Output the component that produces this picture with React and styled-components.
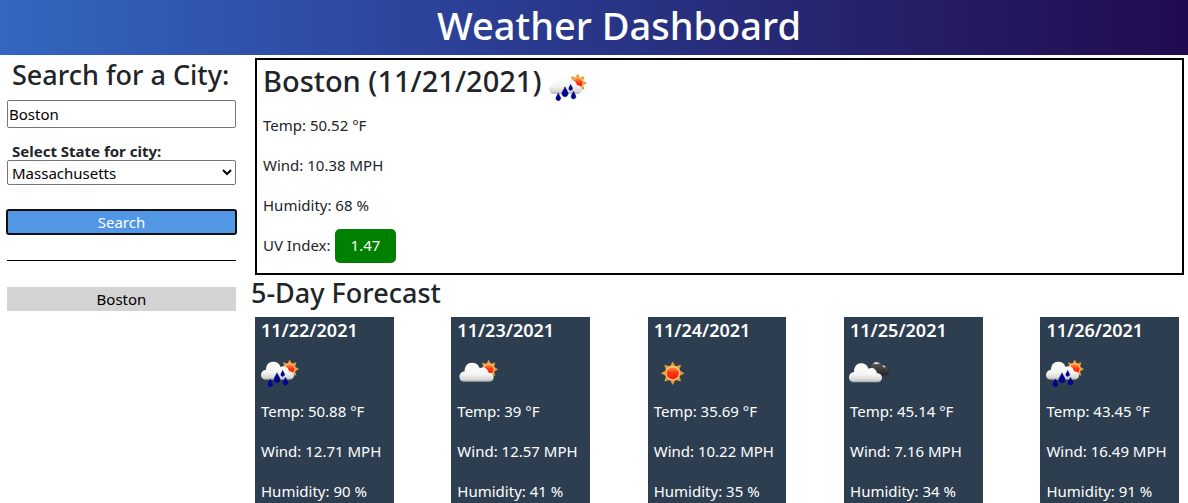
import React, { useState } from "react";
import styled, { createGlobalStyle } from "styled-components";

const GlobalStyle = createGlobalStyle`
  *, *::before, *::after { box-sizing: border-box; }
  body {
    margin: 0;
    background: #fff;
    color: #212529;
    font-family: "Segoe UI", "Noto Sans", "Open Sans", sans-serif;
    font-size: 15px;
    line-height: 24px;
  }
  h1, h2, h3, p { margin: 0; }
  button, input, select { font: inherit; color: #000; }
`;

const Header = styled.header`
  padding: 0 0 5px 50px;
  background: linear-gradient(to right, #3467c0, #2b3f95 40%, #25236c 72%, #220a50);
  color: #fff;
  text-align: center;
`;

const Title = styled.h1`
  font-size: 38px;
  font-weight: 500;
  line-height: 50px;
`;

const Layout = styled.div`
  display: grid;
  grid-template-columns: 243px minmax(0, 1fr);
  gap: 8px;
`;

const Sidebar = styled.aside`
  padding: 3px 7px;
`;

const SearchForm = styled.form`
  display: flex;
  flex-direction: column;
`;

const SearchHeading = styled.label`
  margin-bottom: 8px;
  padding-left: 5px;
  font-size: 27px;
  font-weight: 500;
  line-height: 34px;
  white-space: nowrap;
`;

const CityInput = styled.input`
  width: 100%;
  height: 28px;
  margin-bottom: 11px;
  padding: 1px;
  border: 1px solid #767676;
  border-radius: 2px;
  background: #fff;
`;

const StateLabel = styled.label`
  height: 21px;
  padding-left: 5px;
  font-weight: 700;
`;

const StateSelect = styled.select`
  width: 100%;
  height: 25px;
  margin-bottom: 25px;
  border: 1px solid #767676;
  border-radius: 2px;
  background: #fff;
`;

const SearchButton = styled.button`
  height: 24px;
  padding: 0;
  border: 0;
  border-radius: 2px;
  outline: 2px solid #101010;
  outline-offset: -1px;
  background: #5197e5;
  color: #fff;
  line-height: 24px;
`;

const Divider = styled.hr`
  height: 1px;
  margin: 26px 0;
  border: 0;
  background: #000;
`;

const HistoryButton = styled.button`
  display: block;
  width: 100%;
  height: 24px;
  padding: 0;
  border: 0;
  background: #d3d3d3;
  line-height: 24px;
`;

const Main = styled.main`
  padding: 3px 4px 0 0;
`;

const Current = styled.section`
  margin-left: 4px;
  padding: 0 6px 10px;
  border: 2px solid #000;
`;

const CurrentHeading = styled.div`
  display: flex;
  height: 53px;
  gap: 2px;
`;

const CityName = styled.h2`
  font-size: 29px;
  font-weight: 500;
  line-height: 42px;
`;

const Reading = styled.p`
  & + & { margin-top: 16px; }
`;

const UvReading = styled.div`
  display: flex;
  align-items: baseline;
  gap: 4px;
  margin-top: 12px;
`;

const UvBadge = styled.span`
  padding: 4px 16px 6px;
  border-radius: 5px;
  background: #008000;
  color: #fff;
`;

const ForecastHeading = styled.h2`
  font-size: 27px;
  font-weight: 500;
  line-height: 34px;
  margin: 1px 0 7px;
`;

const Forecast = styled.section`
  display: flex;
  justify-content: space-between;
  padding: 0 5px 0 4px;
`;

const Card = styled.article`
  flex: 0 0 15%;
  padding-bottom: 1px;
  background: #2d3e50;
  color: #fff;
  white-space: nowrap;
`;

const CardDate = styled.h3`
  padding-left: 6px;
  font-size: 18px;
  font-weight: 600;
  line-height: 27px;
`;

const CardReadings = styled.div`
  padding-left: 6px;
`;

const IconSvg = styled.svg`
  display: block;
  flex: none;
  width: 50px;
  height: 50px;
  margin-top: ${({ $top }) => $top}px;
`;

const CardIconRow = styled.div`
  padding: 4px 0 1px;
`;

function Sun({ x, y, scale = 1 }) {
  const points = Array.from({ length: 16 }, (_, i) => {
    const a = (i * Math.PI) / 8;
    const r = i % 2 ? 7.4 : 11.8;
    return `${Math.sin(a) * r},${-Math.cos(a) * r}`;
  }).join(" ");
  return (
    <g transform={`translate(${x} ${y}) scale(${scale})`}>
      <polygon points={points} fill="#e39b37" />
      <circle r="7.2" fill="#ffdf9a" />
      <circle r="6.2" fill="url(#sunFill)" />
    </g>
  );
}

const cloudPath =
  "M5 19C2 19 0 17 0 14C0 11 2 9 5 8.600C5 3 8 0 12 0C16 0 18.500 2 19.500 5.500C23 3.500 27.500 5.500 28 10C31 10 33 12 33 14.500C33 17 31 19 28 19Z";

function Cloud({ x, y, sx = 1, sy = 1, fill = "url(#cloudFill)" }) {
  return <path d={cloudPath} transform={`translate(${x} ${y}) scale(${sx} ${sy})`} fill={fill} />;
}

function Drop({ x, y, scale = 1 }) {
  return (
    <path
      d="M0 -5.500C.700 -3 3.200 -.800 3.200 1.700C3.200 3.700 1.800 5 0 5C-1.800 5 -3.200 3.700 -3.200 1.700C-3.200 -.800 -.700 -3 0 -5.500Z"
      transform={`translate(${x} ${y}) scale(${scale})`}
      fill="#02029a"
      stroke="#00005e"
      strokeWidth=".5"
    />
  );
}

function WeatherIcon({ kind, top = 0 }) {
  return (
    <IconSvg viewBox="0 0 50 50" role="img" aria-label={kind} $top={top}>
      <defs>
        <linearGradient id="cloudFill" x1="0" y1="0" x2="0" y2="1">
          <stop offset="0" stopColor="#ffffff" />
          <stop offset=".6" stopColor="#f4f4f4" />
          <stop offset=".88" stopColor="#d6d6d6" />
          <stop offset="1" stopColor="#a6a6a6" />
        </linearGradient>
        <linearGradient id="darkFill" x1="0" y1="0" x2="0" y2="1">
          <stop offset="0" stopColor="#555555" />
          <stop offset="1" stopColor="#252525" />
        </linearGradient>
        <linearGradient id="sunFill" x1="0" y1="0" x2="0" y2="1">
          <stop offset="0" stopColor="#ff9a4a" />
          <stop offset=".45" stopColor="#ff3512" />
          <stop offset="1" stopColor="#f51a00" />
        </linearGradient>
      </defs>
      {kind === "sun" && <Sun x={24.7} y={25.2} />}
      {kind === "rain" && (
        <>
          <Sun x={34.7} y={21} scale={0.8} />
          <Cloud x={6} y={13.7} sy={0.95} />
          <Drop x={15.3} y={35} scale={0.75} />
          <Drop x={22} y={30} scale={0.95} />
          <Drop x={27.7} y={25.5} scale={0.6} />
          <Drop x={30.5} y={33.3} scale={0.75} />
        </>
      )}
      {kind === "partly" && (
        <>
          <Sun x={37.7} y={21.3} scale={0.8} />
          <Cloud x={8.4} y={14.7} sx={1.04} />
        </>
      )}
      {kind === "clouds" && (
        <>
          <Cloud x={25} y={14} sx={0.62} sy={0.68} fill="#cfd3d6" />
          <path
            d="M26 20C27 16.500 30 15.300 32.500 16.500C35 14.500 38.500 16 39.500 19.500C43 18.500 46 20.500 46 23.500C46 26.500 44 27.500 41.500 27.500H27Z"
            fill="url(#darkFill)"
          />
          <Cloud x={5} y={15.3} />
        </>
      )}
    </IconSvg>
  );
}

const days = [
  { date: "11/22/2021", kind: "rain", temp: "50.88", wind: "12.71", humidity: 90 },
  { date: "11/23/2021", kind: "partly", temp: "39", wind: "12.57", humidity: 41 },
  { date: "11/24/2021", kind: "sun", temp: "35.69", wind: "10.22", humidity: 35 },
  { date: "11/25/2021", kind: "clouds", temp: "45.14", wind: "7.16", humidity: 34 },
  { date: "11/26/2021", kind: "rain", temp: "43.45", wind: "16.49", humidity: 91 },
];

export default function App() {
  const [city, setCity] = useState("Boston");
  return (
    <>
      <GlobalStyle />
      <Header>
        <Title>Weather Dashboard</Title>
      </Header>
      <Layout>
        <Sidebar>
          <SearchForm onSubmit={(e) => e.preventDefault()}>
            <SearchHeading htmlFor="city">Search for a City:</SearchHeading>
            <CityInput id="city" type="text" value={city} onChange={(e) => setCity(e.target.value)} />
            <StateLabel htmlFor="state">Select State for city:</StateLabel>
            <StateSelect id="state" defaultValue="MA">
              <option value="MA">Massachusetts</option>
            </StateSelect>
            <SearchButton type="submit">Search</SearchButton>
          </SearchForm>
          <Divider />
          <HistoryButton type="button" onClick={() => setCity("Boston")}>Boston</HistoryButton>
        </Sidebar>
        <Main>
          <Current>
            <CurrentHeading>
              <CityName>Boston (11/21/2021)</CityName>
              <WeatherIcon kind="rain" top={2} />
            </CurrentHeading>
            <Reading>Temp: 50.52 °F</Reading>
            <Reading>Wind: 10.38 MPH</Reading>
            <Reading>Humidity: 68 %</Reading>
            <UvReading>
              <span>UV Index:</span>
              <UvBadge>1.47</UvBadge>
            </UvReading>
          </Current>
          <ForecastHeading>5-Day Forecast</ForecastHeading>
          <Forecast>
            {days.map((d) => (
              <Card key={d.date}>
                <CardDate>{d.date}</CardDate>
                <CardIconRow>
                  <WeatherIcon kind={d.kind} />
                </CardIconRow>
                <CardReadings>
                  <Reading>Temp: {d.temp} °F</Reading>
                  <Reading>Wind: {d.wind} MPH</Reading>
                  <Reading>Humidity: {d.humidity} %</Reading>
                </CardReadings>
              </Card>
            ))}
          </Forecast>
        </Main>
      </Layout>
    </>
  );
}
